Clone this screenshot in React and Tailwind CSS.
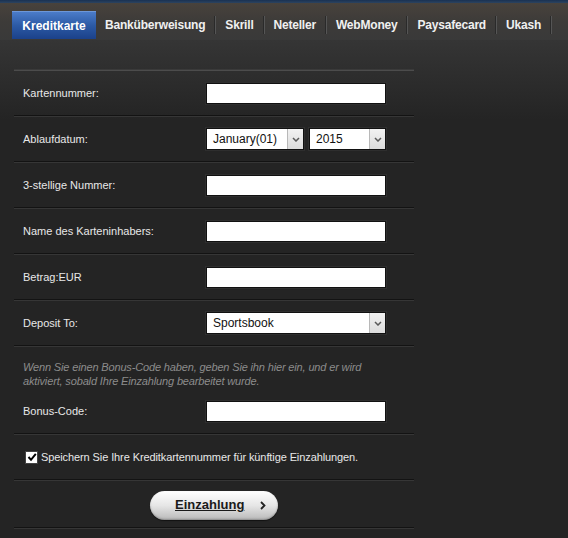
import React from "react";

const Divider = ({ top = "#131313", bottom = "#363636" }) => (
  <div className="w-full">
    <div className="h-px w-full" style={{ backgroundColor: top }} />
    <div className="h-px w-full" style={{ backgroundColor: bottom }} />
  </div>
);

const Input = () => (
  <div className="w-[180px] h-[21px] bg-white border border-[#111] shadow-[0_0_0_1px_#2e2e2e]" />
);

const Chevron = () => (
  <svg width="8" height="5" viewBox="0 0 8 5" className="block">
    <path d="M1 1 L4 4 L7 1" fill="none" stroke="#5a5a5a" strokeWidth="1.5" />
  </svg>
);

const Select = ({ value, width }) => (
  <div
    className="h-[22px] bg-white border border-[#111] flex items-stretch shadow-[0_0_0_1px_#2e2e2e]"
    style={{ width }}
  >
    <div className="flex-1 flex items-center pl-[6px] text-[12px] text-[#111]">{value}</div>
    <div className="w-[16px] bg-gradient-to-b from-[#f2f2f2] to-[#dcdcdc] border-l border-[#b8b8b8] flex items-center justify-center">
      <Chevron />
    </div>
  </div>
);

const Row = ({ label, children }) => (
  <>
    <div className="flex items-center h-[44px]">
      <div className="w-[192px] pl-[9px] text-[11px] text-[#e8e8e8]">{label}</div>
      {children}
    </div>
    <Divider />
  </>
);

const Sep = () => (
  <div className="flex h-[18px] self-center">
    <div className="w-px bg-[#2a2a2a]" />
    <div className="w-px bg-[#555]" />
  </div>
);

const tabs = ["Banküberweisung", "Skrill", "Neteller", "WebMoney", "Paysafecard", "Ukash"];

export default function App() {
  return (
    <div
      className="w-[568px] h-[538px] overflow-hidden bg-[#242424]"
      style={{ fontFamily: '"Liberation Sans", Arial, sans-serif' }}
    >
      {/* Header */}
      <div className="h-[3px] bg-gradient-to-b from-[#1a3152] to-[#2c4460]" />
      <div className="h-[37px] bg-gradient-to-b from-[#48423c] via-[#3d3b39] to-[#393939] pl-[12px] pt-[8px]">
        <div className="flex h-[28px] items-stretch">
          <div className="px-[10px] w-[84px] flex items-center justify-center bg-gradient-to-b from-[#4b7cc9] via-[#2c5aa5] to-[#1b418a] border-t border-[#6d97d8] text-white text-[12px] font-bold">
            Kreditkarte
          </div>
          {tabs.map((t) => (
            <React.Fragment key={t}>
              <div className="px-[9px] flex items-center text-[#f0f0f0] text-[12px] font-bold tracking-[-0.2px]">{t}</div>
              <Sep />
            </React.Fragment>
          ))}
        </div>
      </div>

      {/* Body */}
      <div className="bg-gradient-to-b from-[#353535] to-[#242424] h-[80px] -mb-[80px]" />
      <div className="relative ml-[14px] w-[400px] pt-[29px]">
        <Divider top="#3a3a3a" bottom="#4c4c4c" />
        <Row label="Kartennummer:">
          <Input />
        </Row>
        <Row label="Ablaufdatum:">
          <div className="flex gap-[5px]">
            <Select value="January(01)" width={98} />
            <Select value="2015" width={77} />
          </div>
        </Row>
        <Row label="3-stellige Nummer:">
          <Input />
        </Row>
        <Row label="Name des Karteninhabers:">
          <Input />
        </Row>
        <Row label="Betrag:EUR">
          <Input />
        </Row>
        <Row label="Deposit To:">
          <Select value="Sportsbook" width={180} />
        </Row>

        <div className="pt-[13px] pb-[4px]">
          <div className="pl-[9px] text-[11px] italic leading-[14px] text-[#8c8c8c] tracking-[-0.15px]">
            Wenn Sie einen Bonus-Code haben, geben Sie ihn hier ein, und er wird
            <br />
            aktiviert, sobald Ihre Einzahlung bearbeitet wurde.
          </div>
          <div className="mt-[5px] flex items-center h-[36px]">
            <div className="w-[192px] pl-[9px] text-[11px] text-[#e8e8e8]">Bonus-Code:</div>
            <Input />
          </div>
        </div>
        <Divider />

        <div className="h-[44px] flex items-center pl-[11px]">
          <div className="w-[13px] h-[13px] bg-white border border-[#444] flex items-center justify-center">
            <svg width="10" height="10" viewBox="0 0 10 10">
              <path d="M1.5 5 L4 7.8 L8.8 1.8" fill="none" stroke="#000" strokeWidth="2" />
            </svg>
          </div>
          <div className="ml-[3px] text-[11px] text-[#e8e8e8] tracking-[-0.1px]">
            Speichern Sie Ihre Kreditkartennummer für künftige Einzahlungen.
          </div>
        </div>
        <Divider />

        <div className="h-[46px] flex items-center pl-[136px] pt-[2px]">
          <div className="w-[128px] h-[29px] rounded-full bg-gradient-to-b from-[#ffffff] via-[#e6e6e6] to-[#b9b9b9] shadow-[inset_0_-1px_2px_rgba(0,0,0,0.25),0_1px_1px_rgba(0,0,0,0.5)] flex items-center pl-[25px] pr-[12px]">
            <span className="text-[13px] font-bold underline text-[#1a1a1a]">Einzahlung</span>
            <svg width="6" height="9" viewBox="0 0 6 9" className="ml-auto">
              <path d="M1 1 L4.5 4.5 L1 8" fill="none" stroke="#222" strokeWidth="1.8" />
            </svg>
          </div>
        </div>
        <Divider />
      </div>
    </div>
  );
}
